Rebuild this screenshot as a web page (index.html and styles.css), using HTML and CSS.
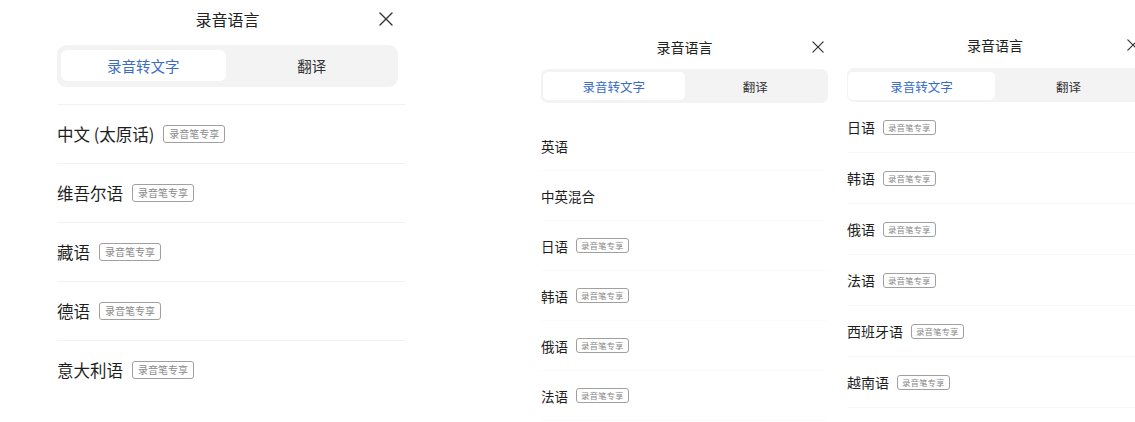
FILE: index.html
```html
<!DOCTYPE html>
<html lang="zh-CN">
<head>
<meta charset="utf-8">
<title>录音语言</title>
<link rel="stylesheet" href="styles.css">
</head>
<body>
<div class="stage">
  <section class="panel panel-a">
    <div class="header">
      <div class="title">录音语言</div>
      <svg class="close" viewBox="0 0 14 14" width="14" height="14"><path d="M1 1 L13 13 M13 1 L1 13" /></svg>
    </div>
    <div class="seg">
      <div class="tab active">录音转文字</div>
      <div class="tab">翻译</div>
    </div>
    <ul class="list">
      <li class="row"><span class="name">中文 (太原话)</span><span class="badge">录音笔专享</span></li>
      <li class="row"><span class="name">维吾尔语</span><span class="badge">录音笔专享</span></li>
      <li class="row"><span class="name">藏语</span><span class="badge">录音笔专享</span></li>
      <li class="row"><span class="name">德语</span><span class="badge">录音笔专享</span></li>
      <li class="row"><span class="name">意大利语</span><span class="badge">录音笔专享</span></li>
    </ul>
  </section>

  <section class="panel panel-b">
    <div class="header">
      <div class="title">录音语言</div>
      <svg class="close" viewBox="0 0 14 14" width="12" height="12"><path d="M1 1 L13 13 M13 1 L1 13" /></svg>
    </div>
    <div class="seg">
      <div class="tab active">录音转文字</div>
      <div class="tab">翻译</div>
    </div>
    <ul class="list">
      <li class="row"><span class="name">英语</span></li>
      <li class="row"><span class="name">中英混合</span></li>
      <li class="row"><span class="name">日语</span><span class="badge">录音笔专享</span></li>
      <li class="row"><span class="name">韩语</span><span class="badge">录音笔专享</span></li>
      <li class="row"><span class="name">俄语</span><span class="badge">录音笔专享</span></li>
      <li class="row"><span class="name">法语</span><span class="badge">录音笔专享</span></li>
    </ul>
  </section>

  <section class="panel panel-c">
    <div class="header">
      <div class="title">录音语言</div>
      <svg class="close" viewBox="0 0 14 14" width="12" height="12"><path d="M1 1 L13 13 M13 1 L1 13" /></svg>
    </div>
    <div class="seg">
      <div class="tab active">录音转文字</div>
      <div class="tab">翻译</div>
    </div>
    <ul class="list">
      <li class="row"><span class="name">日语</span><span class="badge">录音笔专享</span></li>
      <li class="row"><span class="name">韩语</span><span class="badge">录音笔专享</span></li>
      <li class="row"><span class="name">俄语</span><span class="badge">录音笔专享</span></li>
      <li class="row"><span class="name">法语</span><span class="badge">录音笔专享</span></li>
      <li class="row"><span class="name">西班牙语</span><span class="badge">录音笔专享</span></li>
      <li class="row"><span class="name">越南语</span><span class="badge">录音笔专享</span></li>
    </ul>
  </section>
</div>
</body>
</html>
```

FILE: styles.css
```css
* { box-sizing: border-box; }
html, body {
  margin: 0;
  padding: 0;
  background: #ffffff;
  overflow: hidden;
}
body {
  width: 1135px;
  height: 422px;
  font-family: "Noto Sans CJK SC", "Noto Sans", "Liberation Sans", sans-serif;
  color: #1e1e1e;
}
.stage {
  display: flex;
  align-items: flex-start;
  width: 1135px;
  height: 422px;
  overflow: hidden;
}
.panel {
  flex-shrink: 0;
  display: flex;
  flex-direction: column;
}
.header {
  position: relative;
  display: flex;
  align-items: center;
  justify-content: center;
}
.title {
  color: #222;
  line-height: 1;
}
.close {
  position: absolute;
  top: 50%;
  transform: translateY(-50%);
  fill: none;
  stroke: #333;
  stroke-width: 1.4;
  stroke-linecap: round;
}
.seg {
  display: grid;
  grid-template-columns: 1fr 1fr;
  background: #f3f3f4;
}
.tab {
  display: flex;
  align-items: center;
  justify-content: center;
  color: #333;
}
.tab.active {
  background: #ffffff;
  color: #3a6cc4;
}
.list {
  list-style: none;
  margin: 0;
  padding: 0;
}
.row {
  display: flex;
  align-items: center;
}
.badge {
  color: #8a8a8a;
  border: 1px solid #a0a0a0;
  white-space: nowrap;
}

/* panel A */
.panel-a {
  margin-left: 57px;
  width: 348px;
}
.panel-a .header {
  height: 37px;
  margin-right: 7px;
}
.panel-a .title { font-size: 16px; }
.panel-a .close { right: 5px; width: 14px; height: 14px; }
.panel-a .seg {
  margin-top: 8px;
  margin-right: 7px;
  height: 42px;
  padding: 5px 4px 6px;
  column-gap: 4px;
  border-radius: 9px;
}
.panel-a .tab { font-size: 14.5px; border-radius: 6px; }
.panel-a .list { margin-top: 17px; }
.panel-a .row {
  height: 59px;
  border-top: 1px solid #f1f1f1;
  gap: 9px;
}
.panel-a .name { font-size: 16.5px; }
.panel-a .badge {
  font-size: 10px;
  line-height: 16px;
  padding: 0 5px;
  border-radius: 3px;
}

/* panel B */
.panel-b {
  margin-left: 136px;
  width: 287px;
  padding-top: 35px;
}
.panel-b .header { height: 24px; }
.panel-b .title { font-size: 14px; }
.panel-b .close { right: 4px; }
.panel-b .seg {
  margin-top: 10px;
  height: 34px;
  padding: 3px 2px;
  border-radius: 7px;
}
.panel-b .tab { font-size: 12.5px; border-radius: 5px; }
.panel-b .list { margin-top: 18px; }
.panel-b .row {
  height: 50px;
  gap: 8px;
  border-bottom: 1px solid #fbfbfb;
}
.panel-b .name { font-size: 13.5px; }
.panel-b .badge {
  font-size: 8.5px;
  line-height: 13px;
  padding: 0 4px;
  border-radius: 3px;
}

/* panel C */
.panel-c {
  margin-left: 19px;
  width: 296px;
  padding-top: 33px;
}
.panel-c .header { height: 24px; }
.panel-c .title { font-size: 14px; }
.panel-c .close { right: 4px; }
.panel-c .seg {
  margin-top: 11px;
  height: 34px;
  padding: 4px 1px 2px;
  border-radius: 7px;
}
.panel-c .tab { font-size: 12.5px; border-radius: 5px; }
.panel-c .row {
  height: 51px;
  gap: 8px;
  border-bottom: 1px solid #f7f7f7;
}
.panel-c .name { font-size: 14px; }
.panel-c .badge {
  font-size: 8.5px;
  line-height: 13px;
  padding: 0 4px;
  border-radius: 3px;
}
```
